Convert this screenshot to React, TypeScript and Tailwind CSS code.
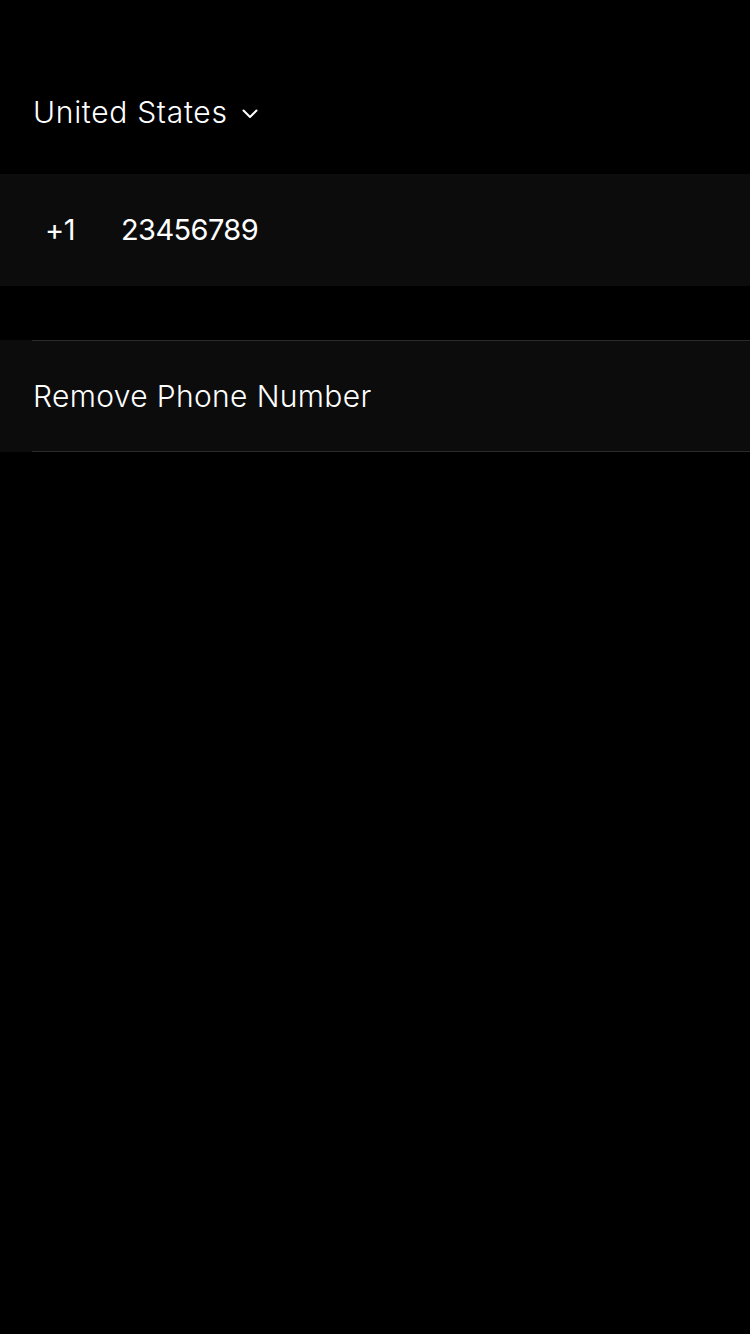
export default function App() {
  return (
    <div className="min-h-[1334px] w-[750px] bg-black text-white font-['Inter',sans-serif] font-light">
      <div className="h-[174px] flex items-end pb-[47px] pl-[33px]">
        <button className="flex items-center gap-[14px] text-[30px] leading-none tracking-[0.7px]">
          United States
          <svg width="16" height="10" viewBox="0 0 16 10" fill="none" className="mt-[4px]">
            <path d="M1.5 1.5 8 8l6.5-6.5" stroke="white" strokeWidth="2" strokeLinecap="round" strokeLinejoin="round" />
          </svg>
        </button>
      </div>

      <div className="h-[112px] bg-[#0c0c0c] flex items-center text-[29px] font-normal">
        <span className="w-[121px] pl-[45px] tracking-[-0.5px]">+1</span>
        <span className="tracking-[-0.6px]">23456789</span>
      </div>

      <div className="h-[54px]" />

      <div className="bg-[#0c0c0c]">
        <div className="ml-[32px] border-t border-[#2a2a2a]" />
        <button className="h-[110px] w-full flex items-center pl-[33px] text-[30px] tracking-[0.35px] text-left">
          Remove Phone Number
        </button>
        <div className="ml-[32px] border-t border-[#2a2a2a]" />
      </div>
    </div>
  );
}
